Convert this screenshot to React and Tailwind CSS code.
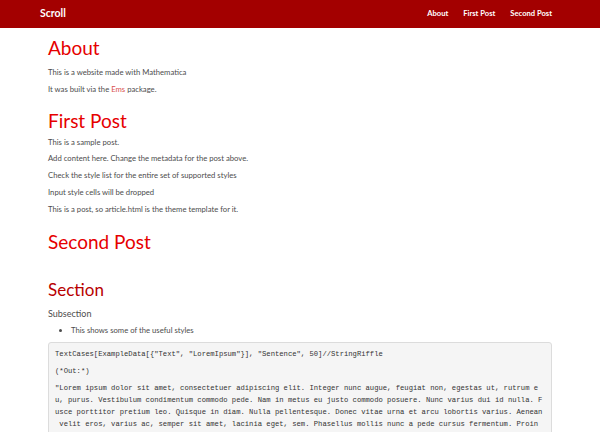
import React from "react";

const lorem = [
  "\"Lorem ipsum dolor sit amet, consectetuer adipiscing elit. Integer nunc augue, feugiat non, egestas ut, rutrum e",
  "u, purus. Vestibulum condimentum commodo pede. Nam in metus eu justo commodo posuere. Nunc varius dui id nulla. F",
  "usce porttitor pretium leo. Quisque in diam. Nulla pellentesque. Donec vitae urna et arcu lobortis varius. Aenean",
  " velit eros, varius ac, semper sit amet, lacinia eget, sem. Phasellus mollis nunc a pede cursus fermentum. Proin",
  "et odio. Nullam turpis. Fusce eget arcu. Mauris placerat ultricies lectus. Nullam pede nisl, ullamcorper ullamc",
];

const Navbar = () => (
  <header className="h-[28px] w-full bg-[#a30000]">
    <nav className="h-full flex items-center justify-between pl-[40px] pr-[48px]">
      <a className="text-[10.5px] font-bold text-white">Scroll</a>
      <div className="flex items-center gap-[15px] text-[7.6px] font-bold text-white">
        <a>About</a>
        <a>First Post</a>
        <a>Second Post</a>
      </div>
    </nav>
  </header>
);

const P = ({ children }) => (
  <p className="text-[7.7px] leading-[16.75px] text-[#4d4d4d]">{children}</p>
);

const H1 = ({ children, className }) => (
  <h1 className={`text-[19px] leading-[22px] font-normal text-[#e60000] ${className}`}>
    {children}
  </h1>
);

export default function App() {
  return (
    <div className="min-h-screen bg-white font-['Lato','Open_Sans',sans-serif]">
      <Navbar />
      <main className="mx-[48px]">
        <H1 className="mt-[9px] mb-[5px]">About</H1>
        <P>This is a website made with Mathematica</P>
        <P>
          It was built via the <a className="text-[#d9534f]">Ems</a> package.
        </P>

        <H1 className="mt-[12px] mb-[2px]">First Post</H1>
        <P>This is a sample post.</P>
        <P>Add content here. Change the metadata for the post above.</P>
        <P>Check the style list for the entire set of supported styles</P>
        <P>Input style cells will be dropped</P>
        <P>This is a post, so article.html is the theme template for it.</P>

        <H1 className="mt-[14px]">Second Post</H1>

        <h2 className="mt-[27px] text-[17px] leading-[19px] font-normal text-[#b80000]">
          Section
        </h2>
        <h3 className="mt-[9px] text-[9px] leading-[12px] font-normal text-[#4d4d4d]">
          Subsection
        </h3>
        <ul className="mt-[4px] list-disc pl-[23px] text-[7.7px] leading-[12px] text-[#4d4d4d]">
          <li>This shows some of the useful styles</li>
        </ul>

        <div className="mt-[6px] rounded-[3px] border border-[#dcdcdc] bg-[#f5f5f5] px-[6px] pt-[5px] font-['Liberation_Mono',monospace] text-[7.2px] leading-[12px] text-[#333] whitespace-pre">
          <div className="mb-[5px]">
            {'TextCases[ExampleData[{"Text", "LoremIpsum"}], "Sentence", 50]//StringRiffle'}
          </div>
          <div className="mb-[5px]">(*Out:*)</div>
          <div>
            {lorem.map((l, i) => (
              <div key={i}>{l}</div>
            ))}
          </div>
        </div>
      </main>
    </div>
  );
}
